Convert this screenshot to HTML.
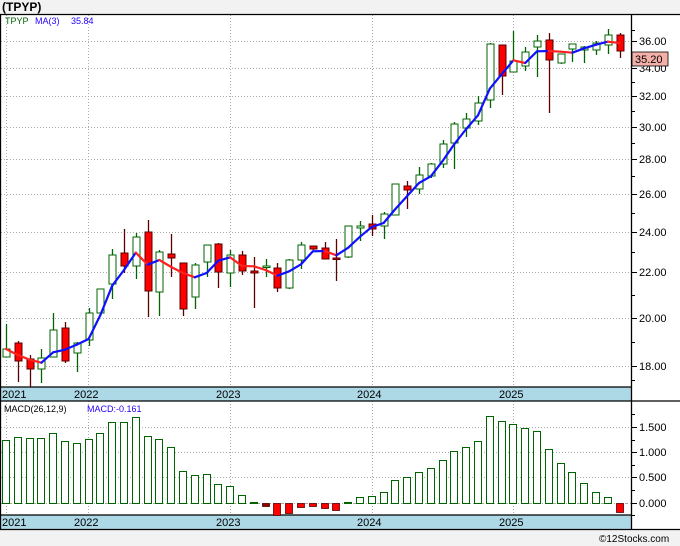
<!DOCTYPE html>
<html><head><meta charset="utf-8"><style>
html,body{margin:0;padding:0;background:#f0f0f0;width:680px;height:546px;overflow:hidden}
svg{display:block;font-family:"Liberation Sans","DejaVu Sans",sans-serif}
</style></head><body>
<svg id="s" width="680" height="546" viewBox="0 0 680 546" xmlns="http://www.w3.org/2000/svg">
<rect x="0" y="0" width="680" height="546" fill="#f2f2f2"/>
<rect x="0" y="14" width="680" height="516" fill="#fff"/>
<text x="2" y="11" font-size="12" font-weight="bold" fill="#000">(TPYP)</text>
<g id="grid" stroke="#aaa" stroke-width="1" stroke-dasharray="1,2"></g>
<rect x="0" y="387" width="631" height="14" fill="#add8e6"/>
<rect x="0" y="515" width="631" height="14" fill="#add8e6"/>
<g stroke="#000" stroke-width="1.3">
<line x1="0" y1="14.5" x2="680" y2="14.5"/>
<line x1="0.5" y1="14" x2="0.5" y2="530"/>
<line x1="631.5" y1="14" x2="631.5" y2="530"/>
<line x1="0" y1="387" x2="631" y2="387"/>
<line x1="0" y1="401" x2="680" y2="401"/>
<line x1="0" y1="515" x2="631" y2="515"/>
<line x1="0" y1="529.5" x2="680" y2="529.5"/>
</g>
<g font-size="11" fill="#000">
<text x="2" y="398">2021</text><text x="74" y="398">2022</text><text x="216" y="398">2023</text><text x="357" y="398">2024</text><text x="499" y="398">2025</text>
<text x="2" y="526">2021</text><text x="74" y="526">2022</text><text x="216" y="526">2023</text><text x="357" y="526">2024</text><text x="499" y="526">2025</text>
</g>
<g id="c"></g>
<g id="m"></g>
<g id="ax" font-size="11" fill="#000"></g>
<text x="5" y="24" font-size="9" fill="#006400">TPYP</text>
<text x="35" y="24" font-size="9" fill="#2200ff">MA(3)</text>
<text x="71" y="24" font-size="9" fill="#2200ff">35.84</text>
<text x="4" y="412" font-size="9" fill="#000">MACD(26,12,9)</text>
<text x="87" y="412" font-size="9" fill="#2200ff">MACD:-0.161</text>
<rect x="632" y="52" width="36" height="14" fill="#f4b0a8" stroke="#000" stroke-width="0.8"/>
<text x="635" y="63" font-size="11" fill="#000">35.20</text>
<text x="599" y="542" font-size="10" fill="#000">©12Stocks.com</text>
</svg>
<script>
var NS="http://www.w3.org/2000/svg";
function el(p,t,a){var e=document.createElementNS(NS,t);for(var k in a)e.setAttribute(k,a[k]);p.appendChild(e);return e;}
var g=document.getElementById('grid');
[41,68,96,127,159,194,232,272,318,366,427,452,477].forEach(function(y){el(g,'line',{x1:1,y1:y+.5,x2:631,y2:y+.5});});
el(g,'line',{x1:1,y1:503.5,x2:631,y2:503.5,'stroke-dasharray':'3,2,1,2'});
[6,88,230,372,513].forEach(function(x){el(g,'line',{x1:x+.5,y1:15,x2:x+.5,y2:387});el(g,'line',{x1:x+.5,y1:401,x2:x+.5,y2:515});});
var ax=document.getElementById('ax');
[[41,'36.00'],[68,'34.00'],[96,'32.00'],[127,'30.00'],[159,'28.00'],[194,'26.00'],[232,'24.00'],[272,'22.00'],[318,'20.00'],[366,'18.00']].forEach(function(a){
 el(ax,'line',{x1:631,y1:a[0]+.5,x2:637,y2:a[0]+.5,stroke:'#000'});
 var t=el(ax,'text',{x:639,y:a[0]+4});t.textContent=a[1];});
[30,54,82,111,143,176,213,252,295,342,380].forEach(function(y){el(ax,'line',{x1:631,y1:y+.5,x2:635,y2:y+.5,stroke:'#000'});});
[[427,'1.500'],[452,'1.000'],[477,'0.500'],[503,'0.000']].forEach(function(a){
 el(ax,'line',{x1:631,y1:a[0]+.5,x2:637,y2:a[0]+.5,stroke:'#000'});
 var t=el(ax,'text',{x:639,y:a[0]+4});t.textContent=a[1];});
[414,440,465,490,515].forEach(function(y){el(ax,'line',{x1:631,y1:y+.5,x2:635,y2:y+.5,stroke:'#000'});});
// [color, bodyTop, bodyBottom, high, low]
var C=[['g',349,357,324,357],['r',343,361,341,382],['r',359,369,355,387],['g',358,369,349,383],['g',330,357,313,357],['r',328,361,322,363],['g',343,353,342,372],['g',313,340,308,346],['g',289,313,289,313],['g',255,284,249,299],
['r',253,266,229,273],['g',237,266,233,279],['r',232,291,220,317],['g',252,292,250,316],['r',254,258,234,277],['r',263,309,263,316],['g',265,297,263,309],['g',245,262,245,277],['r',244,272,243,288],['g',255,273,250,287],
['r',255,271,251,275],['r',271,273,257,308],['g',266,266,259,277],['r',268,288,263,292],['g',260,288,259,289],['g',245,260,242,269],['r',246,249,246,250],['r',248,259,242,259],['r',258,258,239,281],['g',226,257,226,258],
['g',226,228,221,241],['r',224,229,215,236],['g',214,226,212,239],['g',184,215,184,215],['r',186,190,181,209],['g',175,189,167,194],['g',164,176,163,178],['g',144,164,140,168],['g',124,143,122,169],['g',119,128,113,137],
['g',103,121,96,125],['g',44,100,43,108],['r',45,76,45,95],['g',61,72,31,72],['g',52,66,47,71],['g',41,47,35,77],['r',40,60,33,113],['g',54,63,54,64],['g',44,49,44,62],['g',47,50,46,63],
['g',43,50,41,55],['g',35,45,29,54],['r',35,51,33,58]];
var cg=document.getElementById('c');
var closes=[];
C.forEach(function(c,i){var x=Math.round(6+11.8*i)+.5;var col=c[0]=='g'?'#006400':'#5a0000';
 el(cg,'line',{x1:x,y1:c[3],x2:x,y2:c[4],stroke:col,'stroke-width':1.3});
 var h=Math.max(c[2]-c[1],1.5);
 el(cg,'rect',{x:x-3.5,y:c[1],width:7,height:h,fill:c[0]=='g'?'#fff':'#f00',stroke:c[0]=='g'?'#006400':'#5a0000','stroke-width':1});
 closes.push(c[0]=='g'?c[1]:c[2]);});
var ma=[];for(var i=0;i<closes.length;i++){var a=closes.slice(Math.max(0,i-2),i+1);ma.push(a.reduce(function(s,v){return s+v},0)/a.length);}
for(var i=1;i<ma.length;i++){var x1=6+11.8*(i-1),x2=6+11.8*i;
 el(cg,'line',{x1:x1,y1:ma[i-1],x2:x2,y2:ma[i],stroke:ma[i]<=ma[i-1]?'#1010ff':'#ff2020','stroke-width':2.2,'stroke-linecap':'round'});}
var M=[440,437,438,438,433,441,443,439,433,422,422,417,436,439,447,471,475,474,484,486,495,502,506,515,513,507,506,508,510,502,497,496,492,480,477,472,468,460,451,447,441,416,421,424,428,431,449,463,472,483,492,497,512];
var mg=document.getElementById('m');
M.forEach(function(v,i){var x=Math.round(6+11.8*i);
 if(v<=503) el(mg,'rect',{x:x-3.5,y:v+.5,width:7,height:503-v,fill:'#fff',stroke:'#006400','stroke-width':1});
 else el(mg,'rect',{x:x-3.5,y:503.5,width:7,height:v-503,fill:(i==22?'#8b0000':'#f00'),stroke:'#5a0000','stroke-width':0.8});});
</script>
</body></html>
